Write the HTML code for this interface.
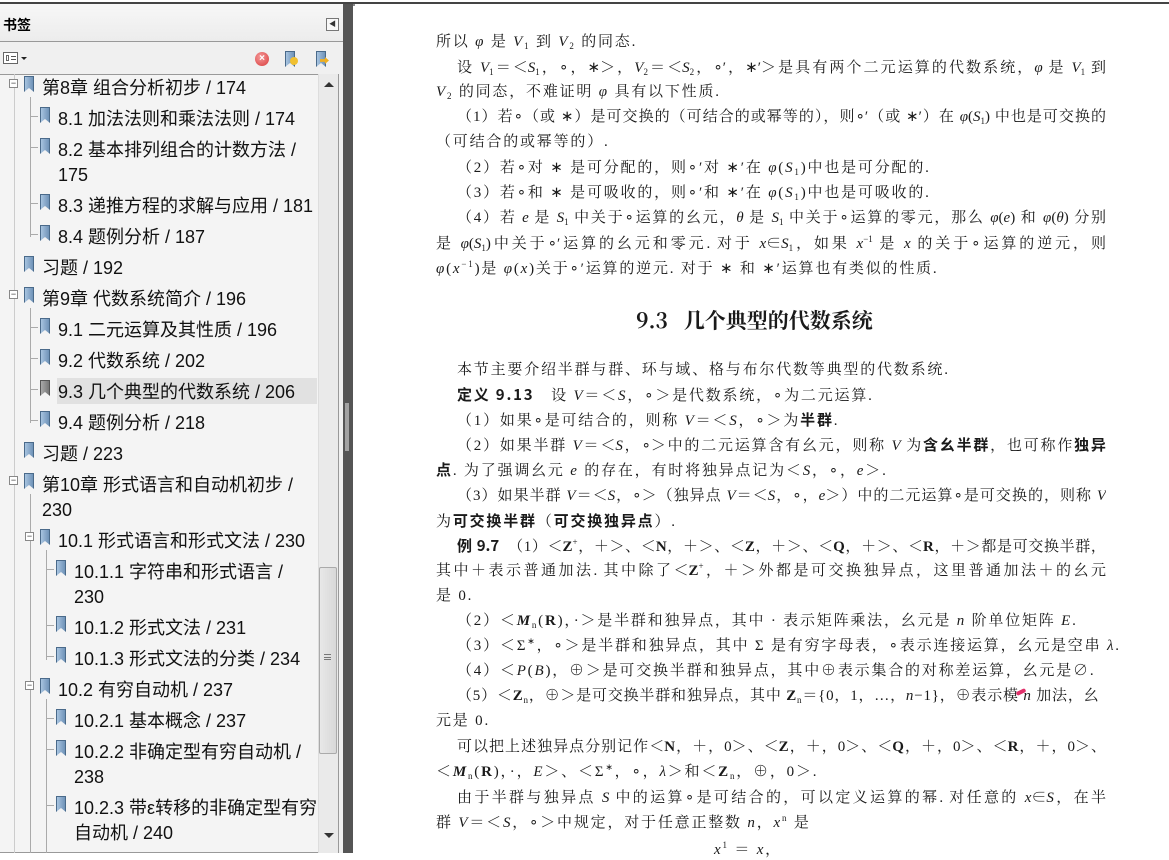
<!DOCTYPE html>
<html><head><meta charset="utf-8"><style>
*{margin:0;padding:0;box-sizing:border-box}
body{width:1169px;height:853px;overflow:hidden;background:#fff;position:relative;font-family:"Liberation Sans","Noto Sans CJK SC",sans-serif}
#top{position:absolute;left:0;top:0;width:1169px;height:4px;background:#fff;border-bottom:2px solid #444}
#side{position:absolute;left:0;top:4px;width:343px;height:849px;background:#f0f0f0}
#hdr{position:absolute;left:0;top:4px;width:343px;height:38px;border-bottom:1px solid #999;background:linear-gradient(#f7f7f7,#ececec)}
#hdr b{position:absolute;left:3px;top:11px;font-size:14px;font-family:"Noto Sans CJK SC",sans-serif;font-weight:bold}
#coll{position:absolute;left:326px;top:14px;width:13px;height:13px;border:1px solid #777;background:#f8f8f8;font-size:7px;line-height:11px;text-align:center;color:#333}
#tree{position:absolute;left:0;top:74px;width:339px;height:779px;background:#f4f4f4;border:1px solid #999;border-left:none;overflow:hidden}
#sb{position:absolute;left:318px;top:74px;width:20px;height:779px;background:#eaeaea;border-left:1px solid #ddd}
#thumb{position:absolute;left:319px;top:567px;width:18px;height:187px;background:linear-gradient(90deg,#e8e8e8,#d8d8d8);border:1px solid #aaa;border-radius:2px}
#div1{position:absolute;left:343px;top:4px;width:10px;height:849px;background:#555}
.it{position:absolute;font-size:18px;color:#111;line-height:25px;white-space:nowrap}
.bm{position:absolute;width:10px;height:16px;background:linear-gradient(90deg,#a8c4e0,#6f93b8);border:1px solid #4a6a8a;clip-path:polygon(0 0,100% 0,100% 100%,50% 75%,0 100%)}
.bx{position:absolute;width:9px;height:9px;border:1px solid #888;background:#fff;font-size:9px;line-height:6px;text-align:center;color:#333}
.vl{position:absolute;border-left:1px solid #aaa}
.hl{position:absolute;border-top:1px solid #aaa}
#page{position:absolute;left:353px;top:6px;width:816px;height:847px;background:#fff}
.l{position:absolute;font-family:"Liberation Serif","Noto Serif CJK SC",serif;font-size:15px;color:#1a1a1a;white-space:nowrap;line-height:20px;height:20px}
.l:not(.j){letter-spacing:1.8px}
.j{text-align:justify;text-align-last:justify;white-space:normal;width:670px;overflow:hidden}
i{font-style:italic}
sub,sup{font-size:9px;line-height:0;vertical-align:baseline;position:relative}
sub{top:3px}sup{top:-6px}
.bd{font-weight:bold;font-family:"Noto Sans CJK SC",sans-serif}
</style></head><body>
<div id="top"></div>
<div id="side"></div>
<div id="hdr"><b>书签</b><div id="coll">◀</div></div>
<div style="position:absolute;left:3px;top:52px;width:15px;height:12px;border:1px solid #666;background:#fff"></div>
<div style="position:absolute;left:6px;top:55px;width:3px;height:6px;border:1px solid #666"></div>
<div style="position:absolute;left:11px;top:56px;width:5px;border-top:1px solid #555;border-bottom:1px solid #555;height:4px"></div>
<div style="position:absolute;left:21px;top:57px;border-left:3px solid transparent;border-right:3px solid transparent;border-top:3px solid #222"></div>
<div style="position:absolute;left:255px;top:52px;width:14px;height:14px;border-radius:50%;background:radial-gradient(circle at 40% 35%,#f59a9a,#d83a3a);color:#fff;font-size:10px;line-height:14px;text-align:center;font-weight:bold">×</div>
<div class="bm" style="left:285px;top:51px"></div>
<div style="position:absolute;left:290px;top:57px;width:8px;height:8px;border-radius:50%;background:#f0c030"></div>
<div class="bm" style="left:316px;top:51px"></div>
<div style="position:absolute;left:320px;top:57px;width:9px;height:7px;background:#f0b020;clip-path:polygon(0 30%,55% 30%,55% 0,100% 50%,55% 100%,55% 70%,0 70%)"></div>
<div id="tree"></div>
<div id="sb"></div>
<div style="position:absolute;left:324px;top:82px;border-left:5px solid transparent;border-right:5px solid transparent;border-bottom:5px solid #333"></div>
<div id="thumb"></div>
<div style="position:absolute;left:324px;top:654px;width:7px;height:6px;border-top:1px solid #777;border-bottom:1px solid #777"></div>
<div style="position:absolute;left:324px;top:657px;width:7px;border-top:1px solid #777"></div>
<div style="position:absolute;left:324px;top:833px;border-left:5px solid transparent;border-right:5px solid transparent;border-top:5px solid #333"></div>
<div id="div1"></div>
<div style="position:absolute;left:345px;top:403px;width:4px;height:48px;background-image:radial-gradient(#bbb 0.8px,transparent 0.9px);background-size:2px 2px"></div>
<div style="position:absolute;left:353px;top:4px;width:2px;height:849px;background:#888"></div>

<div class="vl" style="left:30px;top:97px;height:140px"></div>
<div class="vl" style="left:30px;top:308px;height:115px"></div>
<div class="vl" style="left:30px;top:494px;height:359px"></div>
<div class="vl" style="left:46px;top:550px;height:110px"></div>
<div class="vl" style="left:46px;top:699px;height:154px"></div>
<div class="vl" style="left:14px;top:74px;height:779px;border-color:#ccc"></div>
<div style="position:absolute;left:57px;top:378px;width:260px;height:26px;background:#e1e1e1"></div>

<div class="bx" style="left:9px;top:79px">−</div><div class="bm" style="left:24px;top:76px"></div><div class="it" style="left:42px;top:76px">第8章 组合分析初步 / 174</div>
<div class="hl" style="left:30px;top:116px;width:8px"></div><div class="bm" style="left:40px;top:107px"></div><div class="it" style="left:58px;top:107px">8.1 加法法则和乘法法则 / 174</div>
<div class="hl" style="left:30px;top:147px;width:8px"></div><div class="bm" style="left:40px;top:138px"></div><div class="it" style="left:58px;top:138px">8.2 基本排列组合的计数方法 /</div><div class="it" style="left:58px;top:163px">175</div>
<div class="hl" style="left:30px;top:203px;width:8px"></div><div class="bm" style="left:40px;top:194px"></div><div class="it" style="left:58px;top:194px">8.3 递推方程的求解与应用 / 181</div>
<div class="hl" style="left:30px;top:234px;width:8px"></div><div class="bm" style="left:40px;top:225px"></div><div class="it" style="left:58px;top:225px">8.4 题例分析 / 187</div>
<div class="bm" style="left:24px;top:256px"></div><div class="it" style="left:42px;top:256px">习题 / 192</div>
<div class="bx" style="left:9px;top:290px">−</div><div class="bm" style="left:24px;top:287px"></div><div class="it" style="left:42px;top:287px">第9章 代数系统简介 / 196</div>
<div class="hl" style="left:30px;top:327px;width:8px"></div><div class="bm" style="left:40px;top:318px"></div><div class="it" style="left:58px;top:318px">9.1 二元运算及其性质 / 196</div>
<div class="hl" style="left:30px;top:358px;width:8px"></div><div class="bm" style="left:40px;top:349px"></div><div class="it" style="left:58px;top:349px">9.2 代数系统 / 202</div>
<div class="hl" style="left:30px;top:389px;width:8px"></div><div class="bm" style="left:40px;top:380px;background:linear-gradient(90deg,#aaa,#777);border-color:#555"></div><div class="it" style="left:58px;top:380px">9.3 几个典型的代数系统 / 206</div>
<div class="hl" style="left:30px;top:420px;width:8px"></div><div class="bm" style="left:40px;top:411px"></div><div class="it" style="left:58px;top:411px">9.4 题例分析 / 218</div>
<div class="bm" style="left:24px;top:442px"></div><div class="it" style="left:42px;top:442px">习题 / 223</div>
<div class="bx" style="left:9px;top:476px">−</div><div class="bm" style="left:24px;top:473px"></div><div class="it" style="left:42px;top:473px">第10章 形式语言和自动机初步 /</div><div class="it" style="left:42px;top:498px">230</div>
<div class="bx" style="left:25px;top:532px">−</div><div class="bm" style="left:40px;top:529px"></div><div class="it" style="left:58px;top:529px">10.1 形式语言和形式文法 / 230</div>
<div class="hl" style="left:46px;top:569px;width:8px"></div><div class="bm" style="left:56px;top:560px"></div><div class="it" style="left:74px;top:560px">10.1.1 字符串和形式语言 /</div><div class="it" style="left:74px;top:585px">230</div>
<div class="hl" style="left:46px;top:625px;width:8px"></div><div class="bm" style="left:56px;top:616px"></div><div class="it" style="left:74px;top:616px">10.1.2 形式文法 / 231</div>
<div class="hl" style="left:46px;top:656px;width:8px"></div><div class="bm" style="left:56px;top:647px"></div><div class="it" style="left:74px;top:647px">10.1.3 形式文法的分类 / 234</div>
<div class="bx" style="left:25px;top:681px">−</div><div class="bm" style="left:40px;top:678px"></div><div class="it" style="left:58px;top:678px">10.2 有穷自动机 / 237</div>
<div class="hl" style="left:46px;top:718px;width:8px"></div><div class="bm" style="left:56px;top:709px"></div><div class="it" style="left:74px;top:709px">10.2.1 基本概念 / 237</div>
<div class="hl" style="left:46px;top:749px;width:8px"></div><div class="bm" style="left:56px;top:740px"></div><div class="it" style="left:74px;top:740px">10.2.2 非确定型有穷自动机 /</div><div class="it" style="left:74px;top:765px">238</div>
<div class="hl" style="left:46px;top:805px;width:8px"></div><div class="bm" style="left:56px;top:796px"></div><div class="it" style="left:74px;top:796px">10.2.3 带ε转移的非确定型有穷</div><div class="it" style="left:74px;top:821px">自动机 / 240</div>

<div id="page"></div>
<div class="l" style="left:436px;top:32px">所以 <i>φ</i> 是 <i>V</i><sub>1</sub> 到 <i>V</i><sub>2</sub> 的同态.</div>
<div class="l j" style="left:457px;top:58px;width:649px">设 <i>V</i><sub>1</sub>＝＜<i>S</i><sub>1</sub>，∘，∗＞，<i>V</i><sub>2</sub>＝＜<i>S</i><sub>2</sub>，∘′，∗′＞是具有两个二元运算的代数系统，<i>φ</i> 是 <i>V</i><sub>1</sub> 到</div>
<div class="l" style="left:436px;top:82px"><i>V</i><sub>2</sub> 的同态，不难证明 <i>φ</i> 具有以下性质.</div>
<div class="l j" style="left:457px;top:107px;width:649px">（1）若∘（或 ∗）是可交换的（可结合的或幂等的），则∘′（或 ∗′）在 <i>φ</i>(<i>S</i><sub>1</sub>) 中也是可交换的</div>
<div class="l" style="left:436px;top:132px">（可结合的或幂等的）.</div>
<div class="l" style="left:457px;top:158px">（2）若∘对 ∗ 是可分配的，则∘′对 ∗′在 <i>φ</i>(<i>S</i><sub>1</sub>)中也是可分配的.</div>
<div class="l" style="left:457px;top:183px">（3）若∘和 ∗ 是可吸收的，则∘′和 ∗′在 <i>φ</i>(<i>S</i><sub>1</sub>)中也是可吸收的.</div>
<div class="l j" style="left:457px;top:208px;width:649px">（4）若 <i>e</i> 是 <i>S</i><sub>1</sub> 中关于∘运算的幺元，<i>θ</i> 是 <i>S</i><sub>1</sub> 中关于∘运算的零元，那么 <i>φ</i>(<i>e</i>) 和 <i>φ</i>(<i>θ</i>) 分别</div>
<div class="l j" style="left:436px;top:234px">是 <i>φ</i>(<i>S</i><sub>1</sub>)中关于∘′运算的幺元和零元. 对于 <i>x</i>∈<i>S</i><sub>1</sub>，如果 <i>x</i><sup>−1</sup> 是 <i>x</i> 的关于∘运算的逆元，则</div>
<div class="l" style="left:436px;top:259px"><i>φ</i>(<i>x</i><sup>−1</sup>)是 <i>φ</i>(<i>x</i>)关于∘′运算的逆元. 对于 ∗ 和 ∗′运算也有类似的性质.</div>
<div class="l" style="left:636px;top:307px;font-size:21px;font-weight:bold;line-height:26px;height:26px;letter-spacing:0;font-family:'Noto Serif CJK SC',serif">9.3&nbsp;&nbsp;&nbsp;几个典型的代数系统</div>
<div class="l" style="left:457px;top:360px">本节主要介绍半群与群、环与域、格与布尔代数等典型的代数系统.</div>
<div class="l" style="left:457px;top:385px"><span class="bd">定义 9.13</span>&nbsp;&nbsp;&nbsp;设 <i>V</i>＝＜<i>S</i>，∘＞是代数系统，∘为二元运算.</div>
<div class="l" style="left:457px;top:410px">（1）如果∘是可结合的，则称 <i>V</i>＝＜<i>S</i>，∘＞为<span class="bd">半群</span>.</div>
<div class="l j" style="left:457px;top:435px;width:649px">（2）如果半群 <i>V</i>＝＜<i>S</i>，∘＞中的二元运算含有幺元，则称 <i>V</i> 为<span class="bd">含幺半群</span>，也可称作<span class="bd">独异</span></div>
<div class="l" style="left:436px;top:460px"><span class="bd">点</span>. 为了强调幺元 <i>e</i> 的存在，有时将独异点记为＜<i>S</i>，∘，<i>e</i>＞.</div>
<div class="l j" style="left:457px;top:486px;width:649px">（3）如果半群 <i>V</i>＝＜<i>S</i>，∘＞（独异点 <i>V</i>＝＜<i>S</i>，∘，<i>e</i>＞）中的二元运算∘是可交换的，则称 <i>V</i></div>
<div class="l" style="left:436px;top:511px">为<span class="bd">可交换半群</span>（<span class="bd">可交换独异点</span>）.</div>
<div class="l j" style="left:457px;top:536px;width:649px"><span class="bd">例 9.7</span>&nbsp;&nbsp;（1）＜<b>Z</b><sup>+</sup>，＋＞、＜<b>N</b>，＋＞、＜<b>Z</b>，＋＞、＜<b>Q</b>，＋＞、＜<b>R</b>，＋＞都是可交换半群，</div>
<div class="l j" style="left:436px;top:561px">其中＋表示普通加法. 其中除了＜<b>Z</b><sup>+</sup>，＋＞外都是可交换独异点，这里普通加法＋的幺元</div>
<div class="l" style="left:436px;top:586px">是 0.</div>
<div class="l" style="left:457px;top:611px">（2）＜<b><i>M</i></b><sub>n</sub>(<b>R</b>)，·＞是半群和独异点，其中 · 表示矩阵乘法，幺元是 <i>n</i> 阶单位矩阵 <i>E</i>.</div>
<div class="l" style="left:457px;top:636px">（3）＜Σ<sup>∗</sup>，∘＞是半群和独异点，其中 Σ 是有穷字母表，∘表示连接运算，幺元是空串 <i>λ</i>.</div>
<div class="l" style="left:457px;top:661px">（4）＜<i>P</i>(<i>B</i>)，⊕＞是可交换半群和独异点，其中⊕表示集合的对称差运算，幺元是∅.</div>
<div class="l" style="left:457px;top:686px;letter-spacing:0.8px">（5）＜<b>Z</b><sub>n</sub>，⊕＞是可交换半群和独异点，其中 <b>Z</b><sub>n</sub>＝{0，1，…，<i>n</i>−1}，⊕表示模 <i>n</i> 加法，幺</div>
<div style="position:absolute;left:1016px;top:690px;width:10px;height:4px;background:#e0306a;transform:rotate(-25deg);border-radius:2px"></div>
<div class="l" style="left:436px;top:711px">元是 0.</div>
<div class="l j" style="left:457px;top:737px;width:649px">可以把上述独异点分别记作＜<b>N</b>，＋，0＞、＜<b>Z</b>，＋，0＞、＜<b>Q</b>，＋，0＞、＜<b>R</b>，＋，0＞、</div>
<div class="l" style="left:436px;top:762px">＜<b><i>M</i></b><sub>n</sub>(<b>R</b>)，·，<i>E</i>＞、＜Σ<sup>∗</sup>，∘，<i>λ</i>＞和＜<b>Z</b><sub>n</sub>，⊕，0＞.</div>
<div class="l j" style="left:457px;top:788px;width:649px">由于半群与独异点 <i>S</i> 中的运算∘是可结合的，可以定义运算的幂. 对任意的 <i>x</i>∈<i>S</i>，在半</div>
<div class="l" style="left:436px;top:813px">群 <i>V</i>＝＜<i>S</i>，∘＞中规定，对于任意正整数 <i>n</i>，<i>x</i><sup>n</sup> 是</div>
<div class="l" style="left:714px;top:840px"><i>x</i><sup>1</sup> ＝ <i>x</i>，</div>
</body></html>
